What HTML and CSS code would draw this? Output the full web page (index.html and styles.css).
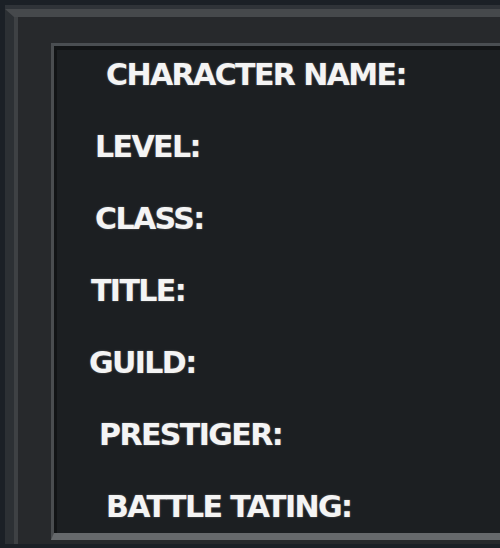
FILE: index.html
```html
<!DOCTYPE html>
<html>
<head>
<meta charset="utf-8">
<link rel="stylesheet" href="styles.css">
</head>
<body>
<div class="outer">
  <div class="bevel">
    <div class="panel">
      <div class="inner">
        <ul class="fields">
          <li class="field f1">CHARACTER NAME:</li>
          <li class="field f2">LEVEL:</li>
          <li class="field f3">CLASS:</li>
          <li class="field f4">TITLE:</li>
          <li class="field f5">GUILD:</li>
          <li class="field f6">PRESTIGER:</li>
          <li class="field f7">BATTLE TATING:</li>
        </ul>
      </div>
    </div>
  </div>
</div>
</body>
</html>
```
FILE: styles.css
```css
html, body {
  margin: 0;
  padding: 0;
  width: 500px;
  height: 548px;
  overflow: hidden;
  background: #1b2026;
}
.outer {
  margin: 5px 0 0 5px;
  border-top: 4px solid #2f3338;
  height: 539px;
  box-sizing: border-box;
}
.bevel {
  border-top: 8px solid #46494c;
  border-left: 9px solid #2c3034;
  height: 100%;
  box-sizing: border-box;
}
.panel {
  border-left: 4px solid #3e4144;
  background: #27292c;
  height: 100%;
  box-sizing: border-box;
  padding: 26px 0 4px 33px;
}
.inner {
  border-top: 3px solid #4a4e52;
  border-left: 3px solid #4a4d50;
  border-bottom: 7px solid #66696c;
  height: 100%;
  box-sizing: border-box;
}
.fields {
  list-style: none;
  margin: 0;
  padding: 0;
  border-top: 4px solid #121416;
  border-left: 3px solid #121416;
  background: #1c1f22;
  height: 100%;
  box-sizing: border-box;
  display: flex;
  flex-direction: column;
  padding-top: 8px;
  gap: 39px;
}
.field {
  font-family: "DejaVu Sans", sans-serif;
  font-weight: bold;
  font-size: 30px;
  line-height: 33px;
  color: #f4f4f4;
  letter-spacing: -1.6px;
  text-shadow: 0 0 2px rgba(255,255,255,0.35);
}
.f1 { margin-left: 49px; }
.f2 { margin-left: 38px; }
.f3 { margin-left: 38px; }
.f4 { margin-left: 34px; }
.f5 { margin-left: 32px; }
.f6 { margin-left: 42px; }
.f7 { margin-left: 49px; }
```
